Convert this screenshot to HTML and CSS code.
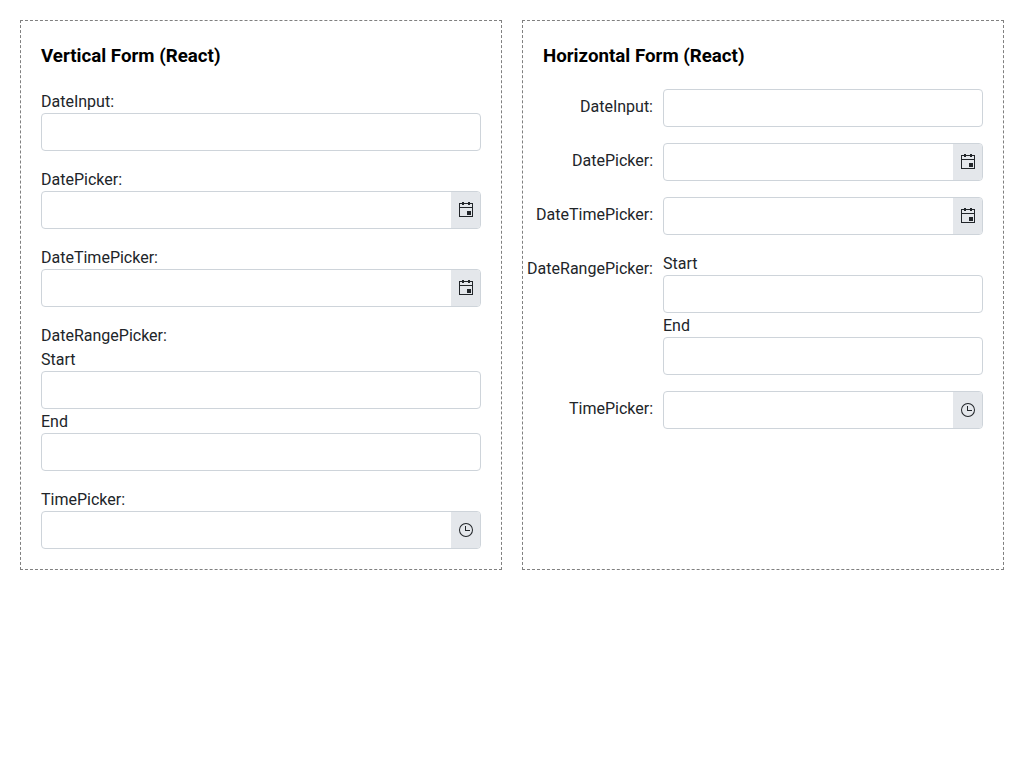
FILE: index.html
```html
<!DOCTYPE html>
<html lang="en">
<head>
<meta charset="utf-8">
<title>Form layouts</title>
<link rel="stylesheet" href="styles.css">
</head>
<body>
<svg class="defs" aria-hidden="true">
  <symbol id="calendar" viewBox="0 0 16 16"><path fill-rule="evenodd" d="M4 0h2v1h4V0h2v1h3v14H1V1h3zM2 2v3h12V2h-2v1h-2V2H6v1H4V2zM2 6v8h12V6zM9 9h4v4H9z"/></symbol>
  <symbol id="clock" viewBox="0 0 16 16"><path d="M8 1a7 7 0 1 0 0 14A7 7 0 0 0 8 1m0 13A6 6 0 1 1 8 2a6 6 0 0 1 0 12M8 4H7v5h5V8H8z"/></symbol>
</svg>
<main class="page">
  <section class="card vertical">
    <h3 class="title">Vertical Form (React)</h3>
    <div class="field"><label class="label">DateInput:</label><div class="wrap"><div class="input"></div></div></div>
    <div class="field"><label class="label">DatePicker:</label><div class="wrap"><div class="input"><span class="button"><svg class="icon"><use href="#calendar"/></svg></span></div></div></div>
    <div class="field"><label class="label">DateTimePicker:</label><div class="wrap"><div class="input"><span class="button"><svg class="icon"><use href="#calendar"/></svg></span></div></div></div>
    <div class="field"><label class="label">DateRangePicker:</label><div class="wrap"><span class="sub">Start</span><div class="input"></div><span class="sub">End</span><div class="input"></div></div></div>
    <div class="field"><label class="label">TimePicker:</label><div class="wrap"><div class="input"><span class="button"><svg class="icon"><use href="#clock"/></svg></span></div></div></div>
  </section>
  <section class="card horizontal">
    <h3 class="title">Horizontal Form (React)</h3>
    <div class="field"><label class="label">DateInput:</label><div class="wrap"><div class="input"></div></div></div>
    <div class="field"><label class="label">DatePicker:</label><div class="wrap"><div class="input"><span class="button"><svg class="icon"><use href="#calendar"/></svg></span></div></div></div>
    <div class="field"><label class="label">DateTimePicker:</label><div class="wrap"><div class="input"><span class="button"><svg class="icon"><use href="#calendar"/></svg></span></div></div></div>
    <div class="field"><label class="label">DateRangePicker:</label><div class="wrap"><span class="sub">Start</span><div class="input"></div><span class="sub">End</span><div class="input"></div></div></div>
    <div class="field"><label class="label">TimePicker:</label><div class="wrap"><div class="input"><span class="button"><svg class="icon"><use href="#clock"/></svg></span></div></div></div>
  </section>
</main>
</body>
</html>
```
FILE: styles.css
```css
* { box-sizing: border-box; }
body { margin: 0; background: #fff; color: #212529; font: 16px/24px Roboto, sans-serif; }
.defs { display: none; }
.page { display: grid; grid-template-columns: 482px 482px; gap: 20px; padding: 20px; }
.card { height: 550px; padding: 20px; border: 1px dashed gray; }
.title { margin: 0; color: #000; font-size: 18.72px; line-height: 30px; font-weight: 700; }
.label, .sub { display: block; height: 24px; padding-top: 1px; white-space: nowrap; }
.vertical .field { margin-top: 16px; }
.vertical .title + .field { margin-top: 18px; }
.input { display: flex; justify-content: flex-end; height: 38px; border: 1px solid #ced4da; border-radius: 4px; overflow: hidden; background: #fff; }
.button { display: flex; align-items: center; width: 29px; padding-left: 7px; background: #e4e7eb; }
.icon { width: 16px; height: 16px; fill: #212529; }
.horizontal .field { display: flex; justify-content: flex-end; gap: 10px; margin-top: 16px; }
.horizontal .title + .field { margin-top: 18px; }
.horizontal .wrap { flex: 0 0 320px; }
.horizontal .label { padding-top: 6px; }
```
